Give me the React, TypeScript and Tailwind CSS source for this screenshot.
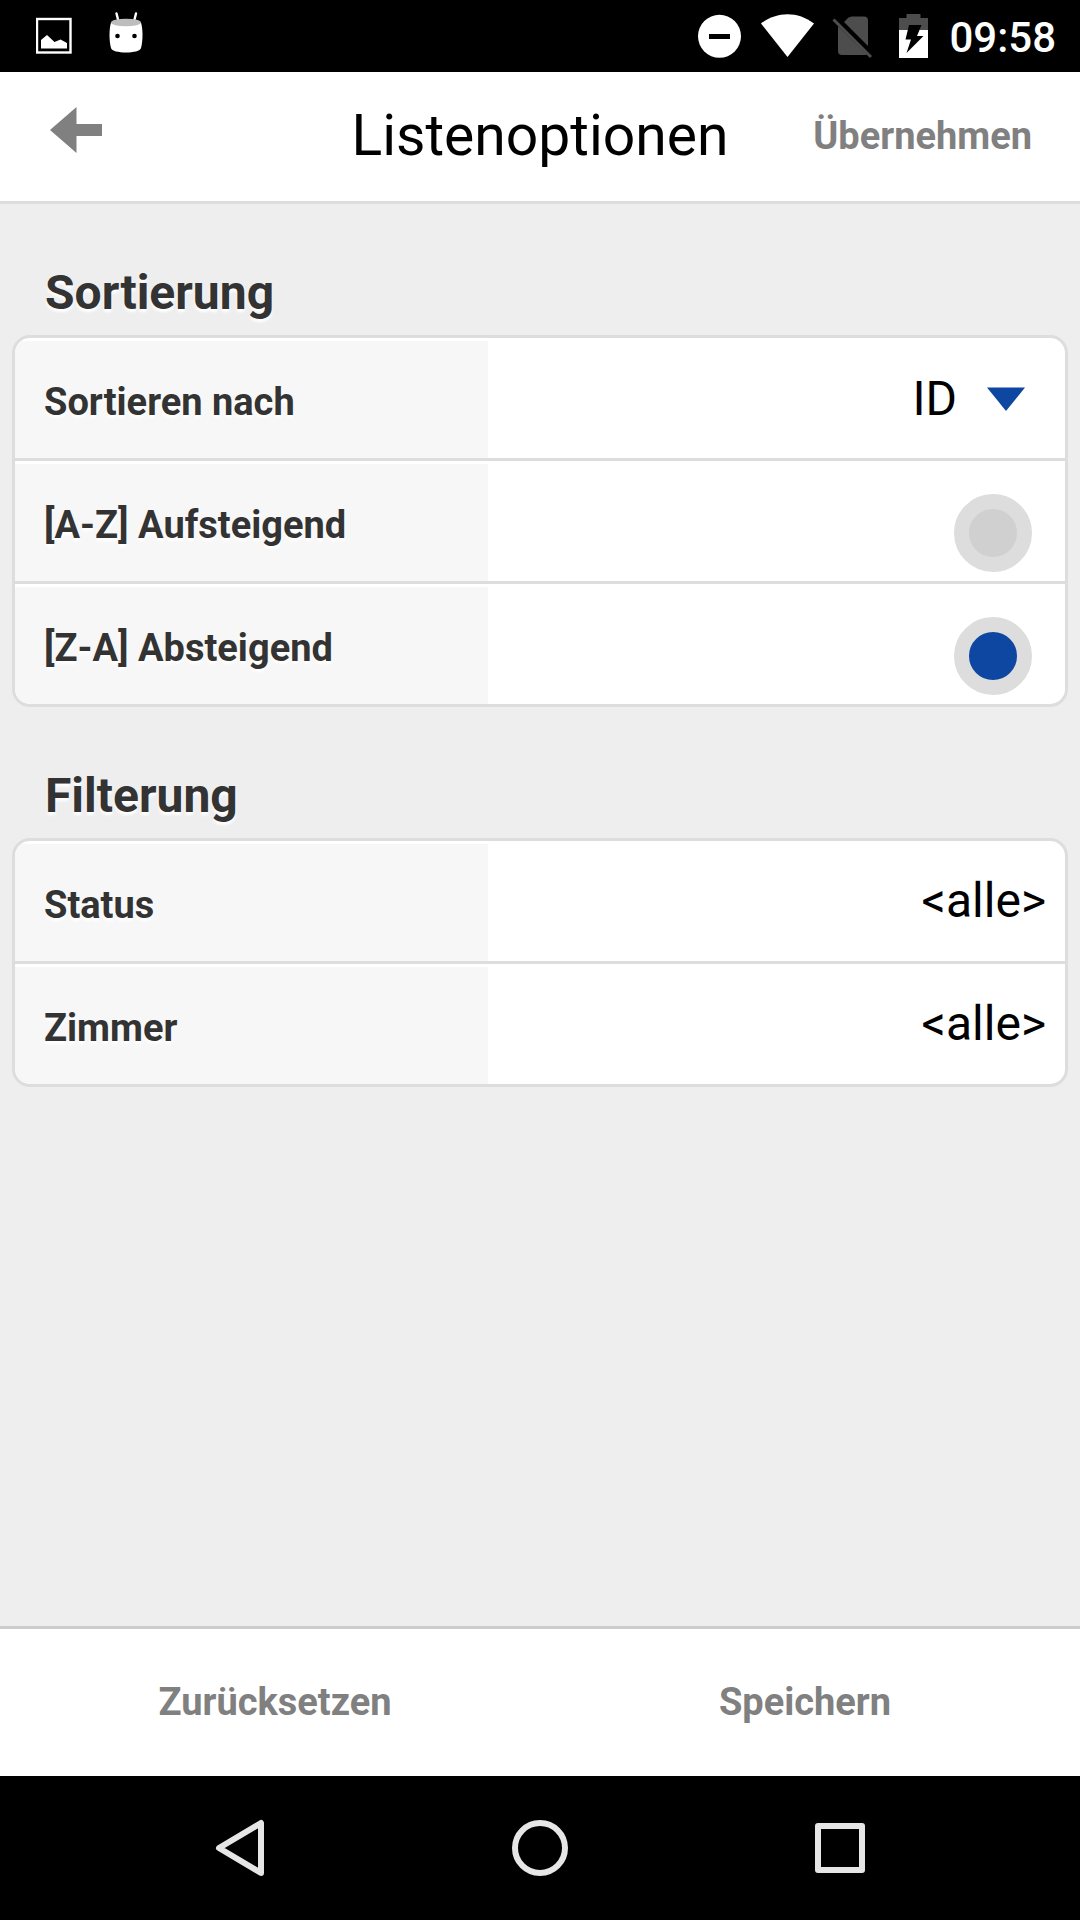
import React, { useState } from 'react'

type SortDirection = 'asc' | 'desc'

interface RowProps {
  label: string
  htmlFor: string
  children: React.ReactNode
}

const Row: React.FC<RowProps> = ({ label, htmlFor, children }) => (
  <div className="box-content flex min-h-[120px]">
    <label
      htmlFor={htmlFor}
      className="mt-[3px] flex w-[45%] items-center bg-[#f7f7f7] pt-1 pl-[29px] text-[38px] leading-[48px] font-bold text-[#333] [text-shadow:0_3px_3px_#fff]"
    >
      {label}
    </label>
    <div className="flex flex-1 justify-end">{children}</div>
  </div>
)

interface SectionProps {
  title: string
  children: React.ReactNode
}

const Section: React.FC<SectionProps> = ({ title, children }) => (
  <section>
    <h2 className="mb-[14px] pl-[33px] text-[48px] leading-[56px] font-bold text-[#333] [text-shadow:0_3px_3px_#fff]">
      {title}
    </h2>
    <div className="divide-y-[3px] divide-[#ddd] overflow-hidden rounded-[18px] border-[3px] border-[#ddd] bg-white">
      {children}
    </div>
  </section>
)

const StatusBar: React.FC = () => (
  <div className="flex h-[72px] items-center justify-between bg-black pr-6 pl-9 text-white">
    <div className="flex items-center gap-9">
      <svg className="h-[72px] w-9" viewBox="36 0 36 72" fill="none">
        <rect x="37" y="19" width="33.5" height="33.5" stroke="#fff" strokeWidth="2.4" />
        <path d="M41 48.5V40l6-5 7.5 7 6-2.5 6.5 3.5v5.5z" fill="#fff" />
      </svg>
      <svg className="h-[72px] w-9" viewBox="108 0 36 72">
        <path d="M116.5 13.5l2 8M136 13.5l-2 8" stroke="#fff" strokeWidth="2.4" strokeLinecap="round" />
        <path d="M111 22.5C109 29 109 41 111 48c1 6 29 6 30 0 2-7 2-19 0-25.5z" fill="#fff" />
        <ellipse cx="126" cy="22.5" rx="15" ry="3.8" fill="#bdbdbd" />
        <circle cx="117.5" cy="36" r="2.3" fill="#000" />
        <circle cx="134.5" cy="36" r="2.3" fill="#000" />
      </svg>
    </div>
    <div className="flex items-center">
      {/* do not disturb, wifi, no sim, charging */}
      <svg className="h-[72px] w-[234px]" viewBox="695 0 234 72">
        <circle cx="719.5" cy="36.3" r="21.5" fill="#fff" />
        <path d="M709 34h21v5h-21z" fill="#000" />
        <path d="M761 23.5C777 11 798 11 814 23.5L787.5 57z" fill="#fff" />
        <path d="M844 22l4-4q1.5-1.5 4-1.5H864q4 0 4 4V46z" fill="#4d4d4d" />
        <path d="M838 26l29 28.5q-1 .5-3 .5H842q-4 0-4-4z" fill="#4d4d4d" />
        <path d="M833.5 19.5l37.5 37.5" stroke="#4d4d4d" strokeWidth="3" />
        <path d="M899 30V18h7.5v-4h14v4h7.5v12z" fill="#4d4d4d" />
        <path d="M899 30h29v28h-29z" fill="#fff" />
        <path d="M909 25h12.5l-4.5 11h6.5L906.5 53l4.5-13.5H905.5z" fill="#000" />
      </svg>
      <span className="pt-[3px] pl-5 text-[42px] leading-[50px] font-medium">09:58</span>
    </div>
  </div>
)

const App: React.FC = () => {
  const [sortBy, setSortBy] = useState('ID')
  const [direction, setDirection] = useState<SortDirection>('desc')

  const radioClass =
    'mr-[33px] mb-[9px] size-[78px] appearance-none self-end rounded-full border-[15px] border-[#ddd] bg-[#d0d0d0] checked:bg-[#0d47a1]'
  const valueClass = 'flex-1 pr-[19px] text-right text-[48px] leading-[56px] text-black'
  const actionClass = 'text-[38px] leading-[48px] font-bold text-[#808080]'

  return (
    <div className="flex min-h-screen flex-col bg-[#eee] font-[Roboto,sans-serif]">
      <StatusBar />

      <header className="grid h-[132px] grid-cols-[1fr_auto_1fr] items-center border-b-[3px] border-[#ddd] bg-white pb-[2px]">
        <button aria-label="Zurück" className="justify-self-start pb-3 pl-[50px]">
          <svg className="h-[46px] w-[52px]" viewBox="0 0 52 46" fill="#808080">
            <path d="M0 23L26.5 0v17H52v12H26.5v17z" />
          </svg>
        </button>
        <h1 className="text-[57px] leading-[68px] text-black">Listenoptionen</h1>
        <button className={`${actionClass} justify-self-end pr-12`}>Übernehmen</button>
      </header>

      <main className="flex flex-1 flex-col gap-[61px] px-3 pt-[61px]">
        <Section title="Sortierung">
          <Row label="Sortieren nach" htmlFor="sort-by">
            <div className="relative flex flex-1 justify-end">
              <select
                id="sort-by"
                value={sortBy}
                onChange={(e) => setSortBy(e.target.value)}
                className="field-sizing-content appearance-none bg-transparent pt-[2px] pr-[108px] text-[48px] text-black"
              >
                <option value="ID">ID</option>
              </select>
              <svg
                className="pointer-events-none absolute top-[49px] right-10 h-6 w-[38px]"
                viewBox="0 0 38 24"
                fill="#0d47a1"
              >
                <path d="M0 .5h38L19 24z" />
              </svg>
            </div>
          </Row>
          <Row label="[A-Z] Aufsteigend" htmlFor="sort-asc">
            <input
              id="sort-asc"
              type="radio"
              name="direction"
              checked={direction === 'asc'}
              onChange={() => setDirection('asc')}
              className={radioClass}
            />
          </Row>
          <Row label="[Z-A] Absteigend" htmlFor="sort-desc">
            <input
              id="sort-desc"
              type="radio"
              name="direction"
              checked={direction === 'desc'}
              onChange={() => setDirection('desc')}
              className={radioClass}
            />
          </Row>
        </Section>

        <Section title="Filterung">
          <Row label="Status" htmlFor="filter-status">
            <button id="filter-status" className={valueClass}>&lt;alle&gt;</button>
          </Row>
          <Row label="Zimmer" htmlFor="filter-room">
            <button id="filter-room" className={valueClass}>&lt;alle&gt;</button>
          </Row>
        </Section>
      </main>

      <footer className="flex h-[150px] border-t-[3px] border-[#ccc] bg-white px-2.5 pb-[2px]">
        <button className={`${actionClass} flex-1`}>Zurücksetzen</button>
        <button className={`${actionClass} flex-1`}>Speichern</button>
      </footer>

      {/* Android navigation bar */}
      <nav className="flex h-36 items-center bg-black px-[90px]">
        <button aria-label="Back" className="flex flex-1 justify-center">
          <svg className="size-[72px]" viewBox="0 0 72 72" fill="none" stroke="#e6e6e6" strokeWidth="6" strokeLinejoin="round">
            <path d="M15 36L57 11v50z" />
          </svg>
        </button>
        <button aria-label="Home" className="flex flex-1 justify-center">
          <svg className="size-[72px]" viewBox="0 0 72 72" fill="none" stroke="#e6e6e6" strokeWidth="6">
            <circle cx="36" cy="36" r="25" />
          </svg>
        </button>
        <button aria-label="Recent apps" className="flex flex-1 justify-center">
          <svg className="size-[72px]" viewBox="0 0 72 72" fill="none" stroke="#e6e6e6" strokeWidth="6" strokeLinejoin="round">
            <rect x="14" y="14" width="44" height="44" />
          </svg>
        </button>
      </nav>
    </div>
  )
}

export default App
